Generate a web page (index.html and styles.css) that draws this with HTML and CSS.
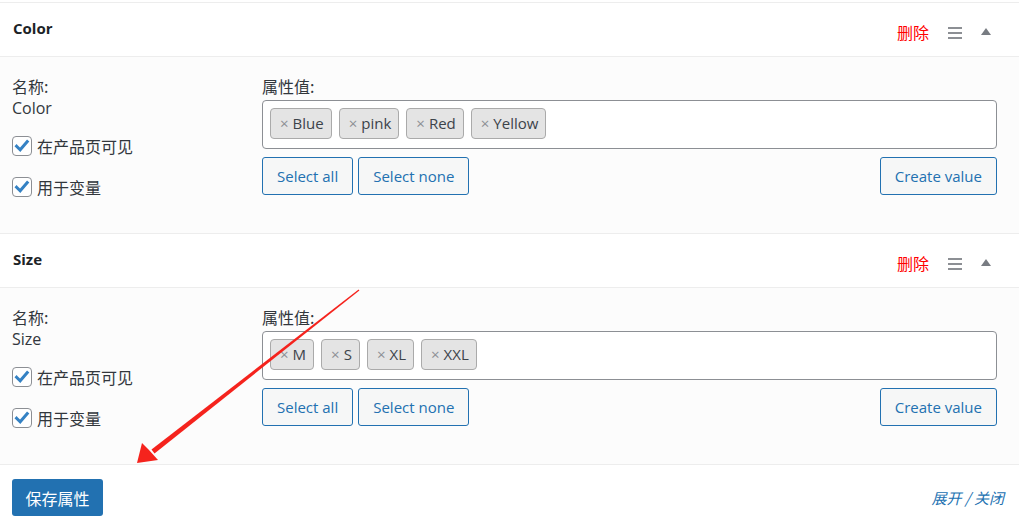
FILE: index.html
```html
<!DOCTYPE html>
<html lang="zh-CN">
<head>
<meta charset="utf-8">
<title>Attributes</title>
<link rel="stylesheet" href="styles.css">
</head>
<body>
<div class="panel">
  <section class="attr">
    <header class="attr-head">
      <h3 class="attr-title">Color</h3>
      <div class="attr-actions">
        <a class="del zh">删除</a>
        <span class="sort-ic"><i></i><i></i><i></i></span>
        <span class="toggle-ic"></span>
      </div>
    </header>
    <div class="attr-body">
      <div class="col-name">
        <div class="zh lbl">名称:</div>
        <div class="name-val">Color</div>
        <label class="cb-row cb-first"><span class="cb"><svg viewBox="0 0 20 20" width="20" height="20"><path d="M4.6 10.2 L8.2 13.8 L15.2 5.6" fill="none" stroke="#3582c4" stroke-width="3" stroke-linecap="square"/></svg></span><span class="zh">在产品页可见</span></label>
        <label class="cb-row cb-second"><span class="cb"><svg viewBox="0 0 20 20" width="20" height="20"><path d="M4.6 10.2 L8.2 13.8 L15.2 5.6" fill="none" stroke="#3582c4" stroke-width="3" stroke-linecap="square"/></svg></span><span class="zh">用于变量</span></label>
      </div>
      <div class="col-values">
        <div class="zh lbl">属性值:</div>
        <div class="tag-box">
          <span class="tag"><span class="x">×</span>Blue</span>
          <span class="tag"><span class="x">×</span>pink</span>
          <span class="tag"><span class="x">×</span>Red</span>
          <span class="tag"><span class="x">×</span>Yellow</span>
        </div>
        <div class="btn-row">
          <button class="btn">Select all</button>
          <button class="btn">Select none</button>
          <button class="btn btn-right">Create value</button>
        </div>
      </div>
    </div>
  </section>

  <section class="attr">
    <header class="attr-head">
      <h3 class="attr-title">Size</h3>
      <div class="attr-actions">
        <a class="del zh">删除</a>
        <span class="sort-ic"><i></i><i></i><i></i></span>
        <span class="toggle-ic"></span>
      </div>
    </header>
    <div class="attr-body">
      <div class="col-name">
        <div class="zh lbl">名称:</div>
        <div class="name-val">Size</div>
        <label class="cb-row cb-first"><span class="cb"><svg viewBox="0 0 20 20" width="20" height="20"><path d="M4.6 10.2 L8.2 13.8 L15.2 5.6" fill="none" stroke="#3582c4" stroke-width="3" stroke-linecap="square"/></svg></span><span class="zh">在产品页可见</span></label>
        <label class="cb-row cb-second"><span class="cb"><svg viewBox="0 0 20 20" width="20" height="20"><path d="M4.6 10.2 L8.2 13.8 L15.2 5.6" fill="none" stroke="#3582c4" stroke-width="3" stroke-linecap="square"/></svg></span><span class="zh">用于变量</span></label>
      </div>
      <div class="col-values">
        <div class="zh lbl">属性值:</div>
        <div class="tag-box">
          <span class="tag"><span class="x">×</span>M</span>
          <span class="tag"><span class="x">×</span>S</span>
          <span class="tag"><span class="x">×</span>XL</span>
          <span class="tag"><span class="x">×</span>XXL</span>
        </div>
        <div class="btn-row">
          <button class="btn">Select all</button>
          <button class="btn">Select none</button>
          <button class="btn btn-right">Create value</button>
        </div>
      </div>
    </div>
  </section>

  <footer class="panel-foot">
    <button class="btn-primary zh">保存属性</button>
    <a class="expand zh">展开 / 关闭</a>
  </footer>

  <svg class="annot" width="1019" height="526" viewBox="0 0 1019 526">
    <polygon points="358.6,289.4 359.4,290.6 154.5,453.4 151.5,449.6" fill="#f5231d"/>
    <polygon points="137,463 142,443 149,450 158,460" fill="#f5231d"/>
  </svg>
</div>
</body>
</html>
```

FILE: styles.css
```css
html, body {
  margin: 0;
  padding: 0;
  background: #fff;
}
body {
  font-family: "Open Sans", "Noto Sans", "Noto Sans CJK SC", sans-serif;
  font-size: 15px;
  color: #32373c;
}
.zh {
  font-family: "Noto Sans CJK SC", "Noto Sans", sans-serif;
  font-size: 16px;
}
.panel {
  position: relative;
  width: 1019px;
  height: 526px;
  padding-top: 2px;
  box-sizing: border-box;
  overflow: hidden;
}
.attr {
  border-top: 1px solid #ededed;
}
.attr-head {
  height: 54px;
  box-sizing: border-box;
  display: flex;
  justify-content: space-between;
  align-items: flex-start;
  padding: 0 28px 0 13px;
  background: #fff;
  border-bottom: 1px solid #ededed;
}
.attr-title {
  margin: 14px 0 0;
  font-size: 15px;
  line-height: 22px;
  font-weight: 700;
  color: #1d2327;
}
.attr-actions {
  display: flex;
  align-items: center;
  margin-top: 18px;
  height: 22px;
}
.del {
  color: #ff0000;
  line-height: 22px;
}
.sort-ic {
  display: flex;
  flex-direction: column;
  gap: 3px;
  width: 14px;
  margin-left: 19px;
  margin-top: 2px;
}
.sort-ic i {
  display: block;
  height: 2px;
  background: #8c8f94;
}
.toggle-ic {
  width: 0;
  height: 0;
  margin-left: 19px;
  margin-top: -2px;
  border-left: 5px solid transparent;
  border-right: 5px solid transparent;
  border-bottom: 7px solid #787c82;
}
.attr-body {
  display: flex;
  background: #fcfcfc;
  padding: 18px 22px 0 12px;
  height: 176px;
  box-sizing: border-box;
}
.col-name {
  width: 250px;
  flex: none;
  display: flex;
  flex-direction: column;
  align-items: flex-start;
}
.lbl {
  line-height: 22px;
}
.name-val {
  line-height: 23px;
  font-size: 16px;
}
.cb-row {
  display: flex;
  align-items: center;
  gap: 5px;
  height: 22px;
  line-height: 22px;
}
.cb-first { margin-top: 15px; }
.cb-second { margin-top: 19px; }
.cb {
  width: 20px;
  height: 20px;
  box-sizing: border-box;
  border: 1px solid #8c8f94;
  border-radius: 4px;
  background: #fff;
  display: flex;
  align-items: center;
  justify-content: center;
  overflow: hidden;
}
.cb svg { display: block; flex: none; }
.col-values {
  flex: 1;
  display: flex;
  flex-direction: column;
}
.tag-box {
  margin-top: 3px;
  height: 49px;
  box-sizing: border-box;
  border: 1px solid #8c8f94;
  border-radius: 4px;
  background: #fff;
  padding: 7px 7px;
  display: flex;
  gap: 7px;
  align-items: flex-start;
}
.tag {
  height: 31px;
  box-sizing: border-box;
  border: 1px solid #aaa;
  border-radius: 4px;
  background: #e4e4e4;
  padding: 0 7px 0 9px;
  line-height: 29px;
  color: #3c434a;
  display: flex;
  align-items: center;
}
.tag .x {
  color: #8c8f94;
  font-size: 15px;
  margin-right: 4px;
}
.btn-row {
  display: flex;
  gap: 5px;
  margin-top: 8px;
}
.btn {
  height: 38px;
  box-sizing: border-box;
  padding: 0 14px;
  border: 1px solid #2271b1;
  border-radius: 3px;
  background: #f6f7f7;
  color: #2271b1;
  font-family: "Open Sans", "Noto Sans", sans-serif;
  font-size: 15px;
  cursor: pointer;
}
.btn-right { margin-left: auto; }
.panel-foot {
  border-top: 1px solid #ededed;
  background: #fff;
  display: flex;
  justify-content: space-between;
  align-items: center;
  padding: 14px 15px 0 12px;
}
.btn-primary {
  height: 37px;
  width: 91px;
  border: none;
  border-radius: 3px;
  background: #2271b1;
  color: #fff;
  padding: 0;
  cursor: pointer;
}
.expand {
  color: #2271b1;
  font-style: italic;
  font-size: 15px;
}
.annot {
  position: absolute;
  left: 0;
  top: 0;
  pointer-events: none;
}
```
